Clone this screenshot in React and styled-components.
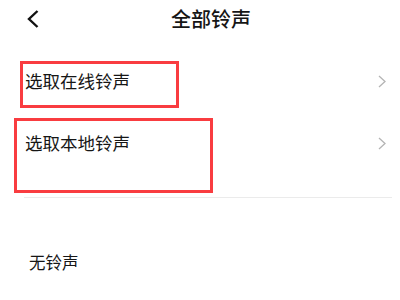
import React from 'react';
import styled, { createGlobalStyle } from 'styled-components';

const GlobalStyle = createGlobalStyle`
  body {
    margin: 0;
    background: #fff;
    font-family: "Noto Sans CJK SC", "Noto Sans", sans-serif;
    color: #161616;
  }
`;

const Page = styled.div`
  width: 400px;
  height: 300px;
  overflow: hidden;
  background: #fff;
`;

const Header = styled.div`
  display: flex;
  align-items: center;
  height: 37px;
  padding: 0 17px 0 27px;
`;

const BackButton = styled.div`
  display: flex;
  width: 12px;
  height: 18px;
`;

const Title = styled.div`
  flex: 1;
  text-align: center;
  font-size: 20px;
  line-height: 1;
  font-weight: 500;
`;

const List = styled.div`
  margin-top: 13px;
`;

const Row = styled.div`
  position: relative;
  display: flex;
  align-items: center;
  justify-content: space-between;
  height: 62px;
  padding: 0 14px 0 ${p => p.indent || 25}px;
  font-size: ${p => p.size || 17.5}px;
  line-height: 1;
`;

const Label = styled.span`
  white-space: nowrap;
`;

const Highlight = styled.div`
  position: absolute;
  left: ${p => p.left}px;
  top: ${p => p.top}px;
  width: ${p => p.w}px;
  height: ${p => p.h}px;
  box-sizing: border-box;
  border: 3px solid #f93c40;
  pointer-events: none;
`;

const Divider = styled.div`
  height: 1px;
  background: #ebebeb;
  margin: 23px 8px 0 24px;
`;

const Section = styled.div`
  margin-top: 33px;
`;

const Chevron = () => (
  <svg width="8" height="13" viewBox="0 0 8 13">
    <polyline points="1,1 7,6.5 1,12" fill="none" stroke="#b4b4b4" strokeWidth="1.3" />
  </svg>
);

const BackIcon = () => (
  <svg width="12" height="18" viewBox="0 0 12 18">
    <polyline points="10.5,1 2,9 10.5,17" fill="none" stroke="#111" strokeWidth="2.4" />
  </svg>
);

export default function App() {
  return (
    <Page>
      <GlobalStyle />
      <Header>
        <BackButton><BackIcon /></BackButton>
        <Title>全部铃声</Title>
      </Header>
      <List>
        <Row>
          <Label>选取在线铃声</Label>
          <Chevron />
          <Highlight left={20} top={11} w={159} h={47} />
        </Row>
        <Row>
          <Label>选取本地铃声</Label>
          <Chevron />
          <Highlight left={14} top={6} w={199} h={75} />
        </Row>
      </List>
      <Divider />
      <Section>
        <Row indent={29} size={16.5}>
          <Label>无铃声</Label>
        </Row>
      </Section>
    </Page>
  );
}
